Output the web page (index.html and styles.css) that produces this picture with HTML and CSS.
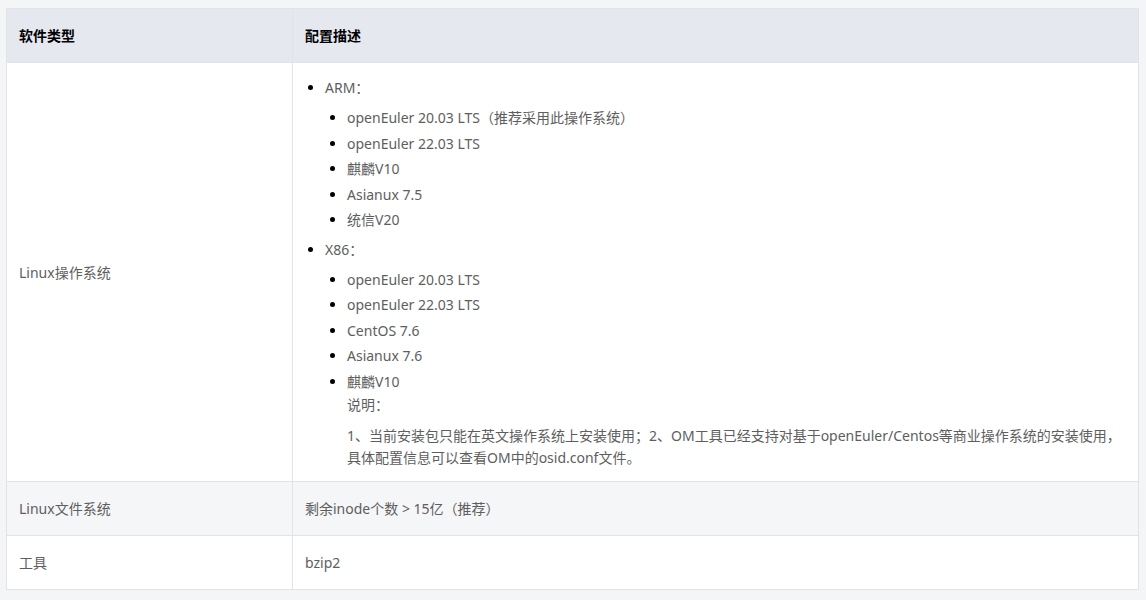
FILE: index.html
```html
<!DOCTYPE html>
<html lang="zh-CN">
<head>
<meta charset="utf-8">
<link rel="stylesheet" href="styles.css">
</head>
<body>
<table class="spec">
  <thead>
    <tr><th class="c1">软件类型</th><th>配置描述</th></tr>
  </thead>
  <tbody>
    <tr>
      <td class="c1">Linux操作系统</td>
      <td class="desc">
        <ul class="outer">
          <li>ARM：
            <ul class="inner">
              <li>openEuler 20.03 LTS（推荐采用此操作系统）</li>
              <li>openEuler 22.03 LTS</li>
              <li>麒麟V10</li>
              <li>Asianux 7.5</li>
              <li>统信V20</li>
            </ul>
          </li>
          <li>X86：
            <ul class="inner">
              <li>openEuler 20.03 LTS</li>
              <li>openEuler 22.03 LTS</li>
              <li>CentOS 7.6</li>
              <li>Asianux 7.6</li>
              <li>麒麟V10
                <div class="note">
                  <p class="note-title">说明：</p>
                  <p class="note-body">1、当前安装包只能在英文操作系统上安装使用；2、OM工具已经支持对基于openEuler/Centos等商业操作系统的安装使用，具体配置信息可以查看OM中的osid.conf文件。</p>
                </div>
              </li>
            </ul>
          </li>
        </ul>
      </td>
    </tr>
    <tr class="alt">
      <td class="c1">Linux文件系统</td>
      <td>剩余inode个数 &gt; 15亿（推荐）</td>
    </tr>
    <tr>
      <td class="c1">工具</td>
      <td>bzip2</td>
    </tr>
  </tbody>
</table>
</body>
</html>
```

FILE: styles.css
```css
html, body {
  margin: 0;
  padding: 0;
  background: #f4f5f7;
}
body {
  padding: 8px 7px 0 6px;
  font-family: "Noto Sans", "Noto Sans CJK SC", sans-serif;
  font-size: 14px;
  color: #5e5e5e;
}
.spec {
  width: 1133px;
  border-collapse: collapse;
  background: #fff;
  border: 1px solid #e2e3e6;
}
.spec th, .spec td {
  border: 1px solid #e2e3e6;
  text-align: left;
  vertical-align: middle;
  padding: 16px 12px;
  line-height: 21px;
}
.spec th {
  background: #e6e8f0;
  color: #000;
  font-weight: bold;
  height: 21px;
}
.c1 { width: 261px; }
.alt td { background: #f5f6f8; }
.spec td.desc { padding-top: 15px; padding-bottom: 12px; }
ul { margin: 0; padding: 0; }
.outer { padding-left: 20px; list-style: disc; line-height: 20px; }
.outer > li + li { margin-top: 7px; }
.outer li::marker { color: #000; }
.inner { padding-left: 22px; margin-top: 7px; list-style: disc; }
.inner > li { line-height: 25.5px; }
.note { line-height: 22px; }
.note-title { margin: 0; padding: 0 0 9px; }
.note-body { margin: 0; }
```
